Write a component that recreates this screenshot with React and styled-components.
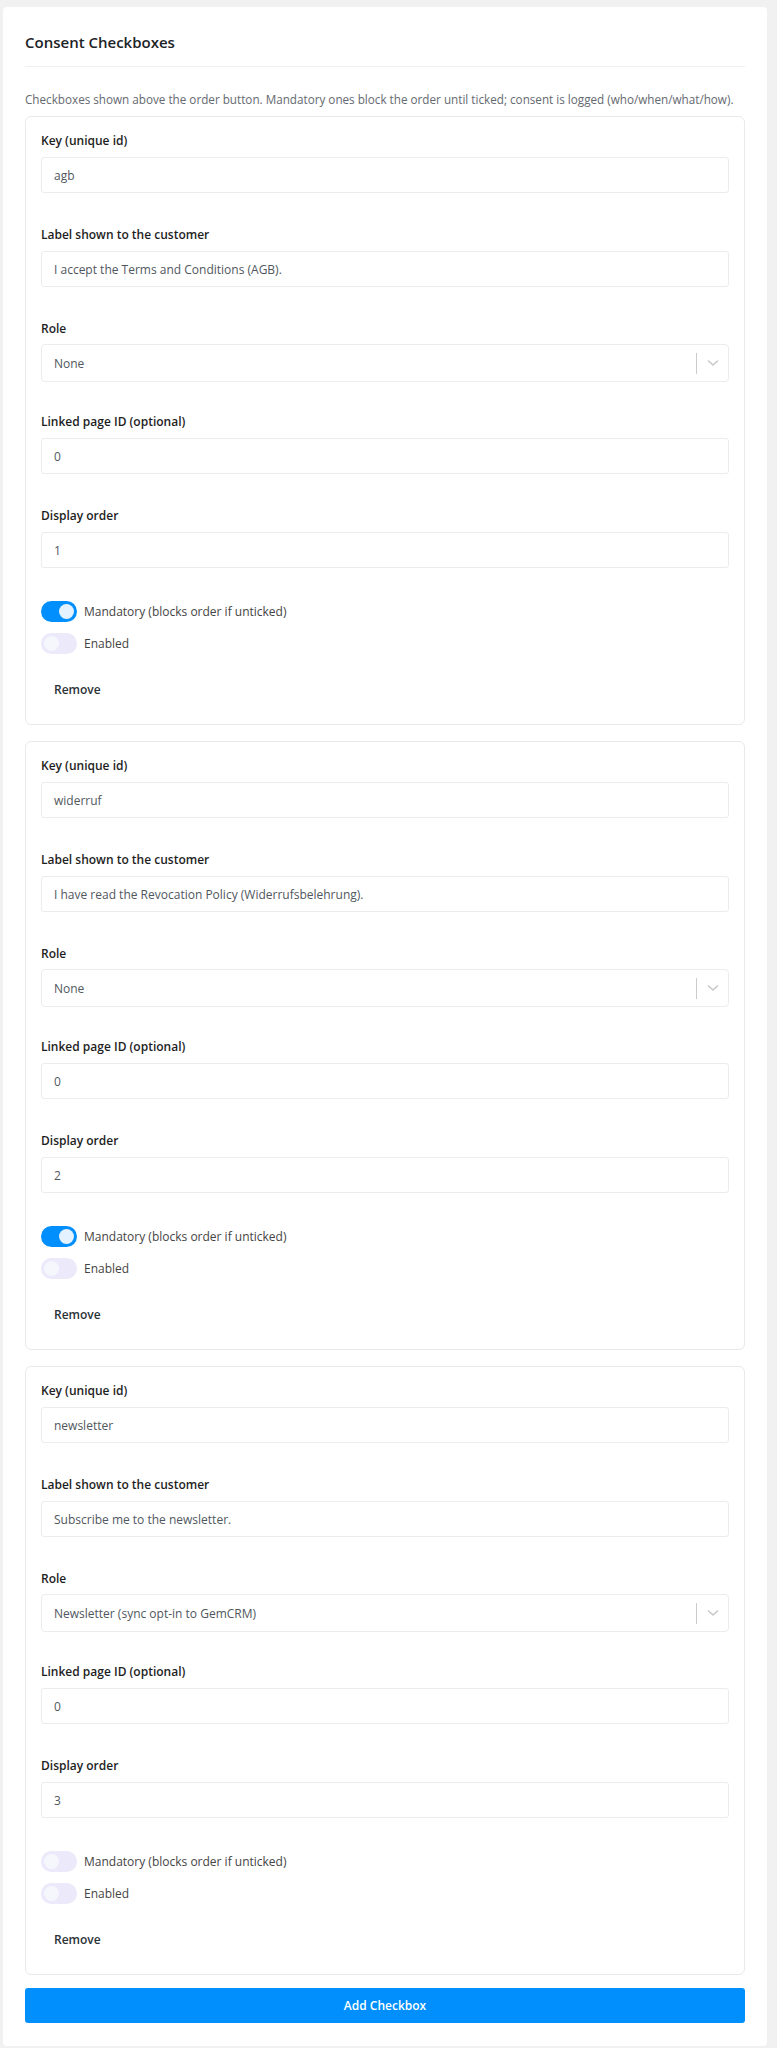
import React from 'react';
import styled, { createGlobalStyle } from 'styled-components';

const GlobalStyle = createGlobalStyle`
  html, body {
    margin: 0;
    padding: 0;
    background: #f1f1f1;
  }
  body {
    font-family: 'Open Sans', 'Noto Sans', sans-serif;
    color: #2c3338;
  }
  * {
    box-sizing: border-box;
  }
`;

const Panel = styled.div`
  margin: 7px 10px 2px 3px;
  padding: 23px 22px 23px 22px;
  background: #fff;
  border-radius: 4px;
`;

const Header = styled.div`
  padding-bottom: 12px;
  border-bottom: 1px solid #f0f0f0;
`;

const Title = styled.h2`
  margin: 0;
  font-size: 15px;
  line-height: 24px;
  font-weight: 600;
  color: #1d2327;
`;

const Description = styled.p`
  margin: 23px 0 8px;
  font-size: 11.7px;
  line-height: 18px;
  white-space: nowrap;
  color: #646970;
`;

const Card = styled.div`
  border: 1px solid #e9e9e9;
  border-radius: 6px;
  padding: 14px 15px 18px;
  margin-bottom: 16px;
`;

const Field = styled.div`
  margin-bottom: 32px;
`;

const Label = styled.label`
  display: block;
  font-size: 12px;
  line-height: 20px;
  font-weight: 600;
  color: #1e1e1e;
`;

const Input = styled.div`
  margin-top: 6px;
  height: 36px;
  padding: 0 12px;
  display: flex;
  align-items: center;
  border: 1px solid #ececec;
  border-radius: 3px;
  font-size: 12px;
  color: #50575e;
`;

const Select = styled.div`
  margin-top: 5px;
  margin-bottom: -2px;
  height: 38px;
  display: flex;
  align-items: center;
  border: 1px solid #ececec;
  border-radius: 4px;
  font-size: 12px;
  color: #50575e;
`;

const SelectValue = styled.div`
  flex: 1;
  padding: 0 12px;
`;

const Indicator = styled.div`
  width: 32px;
  height: 21px;
  display: flex;
  align-items: center;
  justify-content: center;
  border-left: 1px solid #cccccc;
  color: #c8c8c8;
`;

const Toggles = styled.div`
  display: flex;
  flex-direction: column;
  gap: 10px;
`;

const ToggleRow = styled.div`
  display: flex;
  align-items: center;
  gap: 7px;
  height: 22px;
  font-size: 12px;
  color: #444;
`;

const Track = styled.span`
  position: relative;
  width: 36px;
  height: 21px;
  border-radius: 11px;
  background: ${(p) => (p.$on ? '#008ffd' : '#ebe9fa')};

  &::after {
    content: '';
    position: absolute;
    top: 3px;
    left: ${(p) => (p.$on ? '18px' : '3px')};
    width: 15px;
    height: 15px;
    border-radius: 50%;
    background: ${(p) => (p.$on ? '#e4f1ff' : '#f6f6fd')};
  }
`;

const RemoveButton = styled.button`
  margin-top: 18px;
  height: 34px;
  padding: 0 13px;
  border: none;
  background: transparent;
  font-family: inherit;
  font-size: 12px;
  font-weight: 600;
  color: #2c3338;
  cursor: pointer;
`;

const AddButton = styled.button`
  display: block;
  width: 100%;
  height: 35px;
  margin-top: -3px;
  border: none;
  border-radius: 3px;
  background: #008ffd;
  color: #fff;
  font-family: inherit;
  font-size: 12px;
  font-weight: 600;
  cursor: pointer;
`;

const Chevron = () => (
  <svg width="12" height="8" viewBox="0 0 12 8" fill="none">
    <path d="M1.5 2 L6 6 L10.5 2" stroke="currentColor" strokeWidth="1.6" strokeLinecap="round" strokeLinejoin="round" />
  </svg>
);

const checkboxes = [
  {
    key: 'agb',
    label: 'I accept the Terms and Conditions (AGB).',
    role: 'None',
    page: '0',
    order: '1',
    mandatory: true,
    enabled: false,
  },
  {
    key: 'widerruf',
    label: 'I have read the Revocation Policy (Widerrufsbelehrung).',
    role: 'None',
    page: '0',
    order: '2',
    mandatory: true,
    enabled: false,
  },
  {
    key: 'newsletter',
    label: 'Subscribe me to the newsletter.',
    role: 'Newsletter (sync opt-in to GemCRM)',
    page: '0',
    order: '3',
    mandatory: false,
    enabled: false,
  },
];

const CheckboxCard = ({ item }) => (
  <Card>
    <Field>
      <Label>Key (unique id)</Label>
      <Input>{item.key}</Input>
    </Field>
    <Field>
      <Label>Label shown to the customer</Label>
      <Input>{item.label}</Input>
    </Field>
    <Field>
      <Label>Role</Label>
      <Select>
        <SelectValue>{item.role}</SelectValue>
        <Indicator>
          <Chevron />
        </Indicator>
      </Select>
    </Field>
    <Field>
      <Label>Linked page ID (optional)</Label>
      <Input>{item.page}</Input>
    </Field>
    <Field>
      <Label>Display order</Label>
      <Input>{item.order}</Input>
    </Field>
    <Toggles>
      <ToggleRow>
        <Track $on={item.mandatory} />
        Mandatory (blocks order if unticked)
      </ToggleRow>
      <ToggleRow>
        <Track $on={item.enabled} />
        Enabled
      </ToggleRow>
    </Toggles>
    <RemoveButton>Remove</RemoveButton>
  </Card>
);

const App = () => (
  <>
    <GlobalStyle />
    <Panel>
      <Header>
        <Title>Consent Checkboxes</Title>
      </Header>
      <Description>
        Checkboxes shown above the order button. Mandatory ones block the order
        until ticked; consent is logged (who/when/what/how).
      </Description>
      {checkboxes.map((item) => (
        <CheckboxCard key={item.key} item={item} />
      ))}
      <AddButton>Add Checkbox</AddButton>
    </Panel>
  </>
);

export default App;
